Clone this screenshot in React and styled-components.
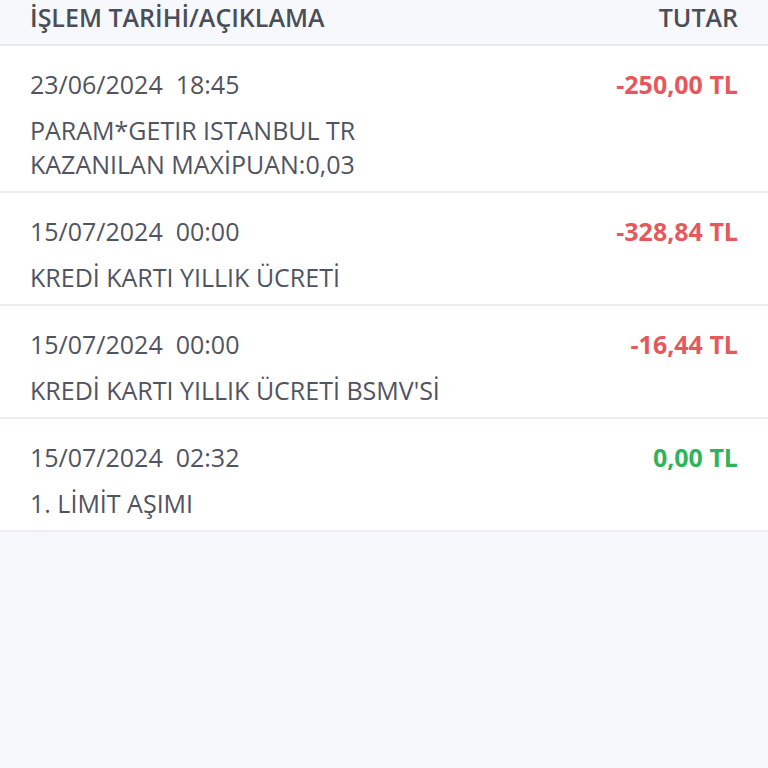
import styled, { createGlobalStyle } from "styled-components"

const GlobalStyle = createGlobalStyle`
    html, body {
        margin: 0;
        padding: 0;
        background: #f7f8fb;
    }
    body {
        font-family: "Open Sans", "Noto Sans", sans-serif;
    }
`

const Page = styled.div`
    width: 768px;
    min-height: 768px;
    background: #f7f8fb;
    color: #50545f;
`

const Header = styled.div`
    display: flex;
    justify-content: space-between;
    align-items: center;
    height: 44px;
    padding: 0 30px;
    background: #f7f8fb;
    border-bottom: 2px solid #e8eaee;
    font-size: 25px;
    font-weight: 600;
    color: #4a4e59;
    & span {
        margin-top: -11px;
    }
`

const List = styled.div`
    background: #ffffff;
`

const Row = styled.div`
    display: flex;
    justify-content: space-between;
    align-items: flex-start;
    padding: 21px 30px 10px 30px;
    border-bottom: 2px solid #eceef1;
`

const Info = styled.div`
    display: flex;
    flex-direction: column;
    gap: 12px;
`

const DateLine = styled.div`
    font-size: 25px;
    line-height: 34px;
    white-space: pre;
`

const Desc = styled.div`
    font-size: 25px;
    line-height: 34px;
`

const Amount = styled.div`
    font-size: 25px;
    line-height: 34px;
    font-weight: 700;
    color: ${p => p.$positive ? "#2fb45a" : "#e5585c"};
`

const rows = [
    { date: "23/06/2024  18:45", desc: ["PARAM*GETIR ISTANBUL TR", "KAZANILAN MAXİPUAN:0,03"], amount: "-250,00 TL" },
    { date: "15/07/2024  00:00", desc: ["KREDİ KARTI YILLIK ÜCRETİ"], amount: "-328,84 TL" },
    { date: "15/07/2024  00:00", desc: ["KREDİ KARTI YILLIK ÜCRETİ BSMV'Sİ"], amount: "-16,44 TL" },
    { date: "15/07/2024  02:32", desc: ["1. LİMİT AŞIMI"], amount: "0,00 TL", positive: true },
]

export default function App(){
    return <Page>
        <GlobalStyle />
        <Header>
            <span>İŞLEM TARİHİ/AÇIKLAMA</span>
            <span>TUTAR</span>
        </Header>
        <List>
            {rows.map((r, i) => (
                <Row key={i}>
                    <Info>
                        <DateLine>{r.date}</DateLine>
                        <Desc>
                            {r.desc.map((d, j) => <div key={j}>{d}</div>)}
                        </Desc>
                    </Info>
                    <Amount $positive={r.positive}>{r.amount}</Amount>
                </Row>
            ))}
        </List>
    </Page>
}
